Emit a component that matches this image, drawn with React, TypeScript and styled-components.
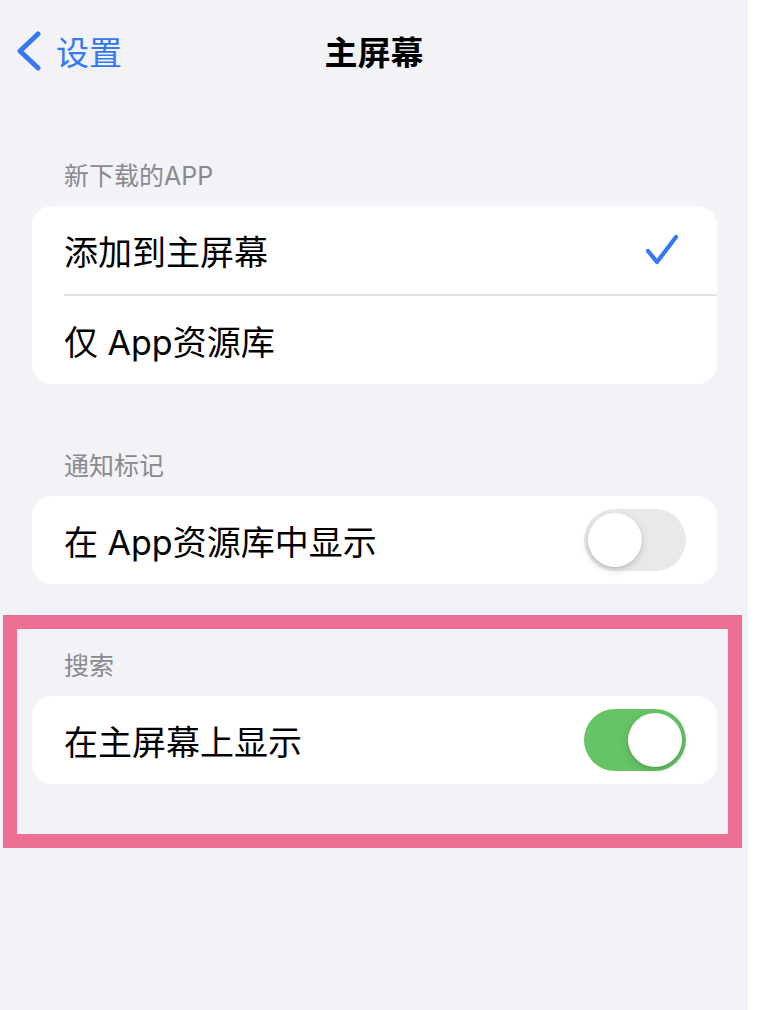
import styled, { createGlobalStyle } from "styled-components";

const GlobalStyle = createGlobalStyle`
  html, body {
    margin: 0;
    padding: 0;
    background: #ffffff;
  }
  body {
    font-family: Inter, "Noto Sans CJK SC", sans-serif;
    -webkit-font-smoothing: antialiased;
  }
`;

const Screen = styled.div`
  width: 748px;
  min-height: 1010px;
  background: #f2f2f7;
  display: flex;
  flex-direction: column;
`;

const NavBar = styled.header`
  height: 102px;
  display: grid;
  grid-template-columns: 1fr auto 1fr;
  align-items: center;
`;

const BackButton = styled.div`
  display: flex;
  align-items: center;
  gap: 14px;
  padding-left: 16px;
  color: #3478f6;
  font-size: 33px;
`;

const NavTitle = styled.h1`
  margin: 0;
  font-size: 33px;
  font-weight: 700;
  color: #000;
`;

const Content = styled.main`
  display: flex;
  flex-direction: column;
  gap: 66px;
  padding-top: 58px;
`;

const Section = styled.section`
  position: relative;
  display: flex;
  flex-direction: column;
`;

const SectionHeader = styled.div`
  padding: 0 64px 14px;
  line-height: 32px;
  font-size: 25px;
  color: #8a8a8e;
`;

const Card = styled.div`
  margin: 0 31px 0 32px;
  background: #ffffff;
  border-radius: 20px;
  overflow: hidden;
`;

const Row = styled.div<{ $divider?: boolean }>`
  height: 88px;
  display: flex;
  align-items: center;
  justify-content: space-between;
  margin-left: 32px;
  padding-right: 32px;
  font-size: 34px;
  color: #000;
  border-bottom: ${(p) => (p.$divider ? "2px solid #e3e3e6" : "none")};
`;

const Track = styled.div<{ $on?: boolean }>`
  width: 102px;
  height: 62px;
  border-radius: 31px;
  background: ${(p) => (p.$on ? "#65c466" : "#e9e9eb")};
  padding: 4px;
  box-sizing: border-box;
  display: flex;
  justify-content: ${(p) => (p.$on ? "flex-end" : "flex-start")};
  margin-right: -1px;
`;

const Knob = styled.div`
  width: 54px;
  height: 54px;
  border-radius: 50%;
  background: #ffffff;
  box-shadow: 0 3px 8px rgba(0, 0, 0, 0.15), 0 1px 2px rgba(0, 0, 0, 0.1);
`;

const CheckMark = styled.svg`
  margin-right: 6px;
`;

const Highlight = styled.div`
  position: absolute;
  top: -35px;
  left: 3px;
  right: 6px;
  bottom: -64px;
  border: 14px solid #ee6f94;
  pointer-events: none;
`;

const Toggle = ({ on }: { on?: boolean }) => (
  <Track $on={on}>
    <Knob />
  </Track>
);

const Chevron = () => (
  <svg width="26" height="40" viewBox="0 0 26 40">
    <path
      d="M22 3 L4 20 L22 37"
      fill="none"
      stroke="#3478f6"
      strokeWidth="5"
      strokeLinecap="round"
      strokeLinejoin="round"
    />
  </svg>
);

const Check = () => (
  <CheckMark width="34" height="32" viewBox="0 0 34 32">
    <path
      d="M3 17 L12 28 L31 3"
      fill="none"
      stroke="#3478f6"
      strokeWidth="4.2"
      strokeLinecap="round"
      strokeLinejoin="round"
    />
  </CheckMark>
);

export default function App() {
  return (
    <>
      <GlobalStyle />
      <Screen>
        <NavBar>
          <BackButton>
            <Chevron />
            <span>设置</span>
          </BackButton>
          <NavTitle>主屏幕</NavTitle>
          <div />
        </NavBar>
        <Content>
          <Section>
            <SectionHeader>新下载的APP</SectionHeader>
            <Card>
              <Row $divider>
                <span>添加到主屏幕</span>
                <Check />
              </Row>
              <Row>
                <span>仅 App资源库</span>
              </Row>
            </Card>
          </Section>
          <Section>
            <SectionHeader>通知标记</SectionHeader>
            <Card>
              <Row>
                <span>在 App资源库中显示</span>
                <Toggle />
              </Row>
            </Card>
          </Section>
          <Section>
            <SectionHeader>搜索</SectionHeader>
            <Card>
              <Row>
                <span>在主屏幕上显示</span>
                <Toggle on />
              </Row>
            </Card>
            <Highlight />
          </Section>
        </Content>
      </Screen>
    </>
  );
}
